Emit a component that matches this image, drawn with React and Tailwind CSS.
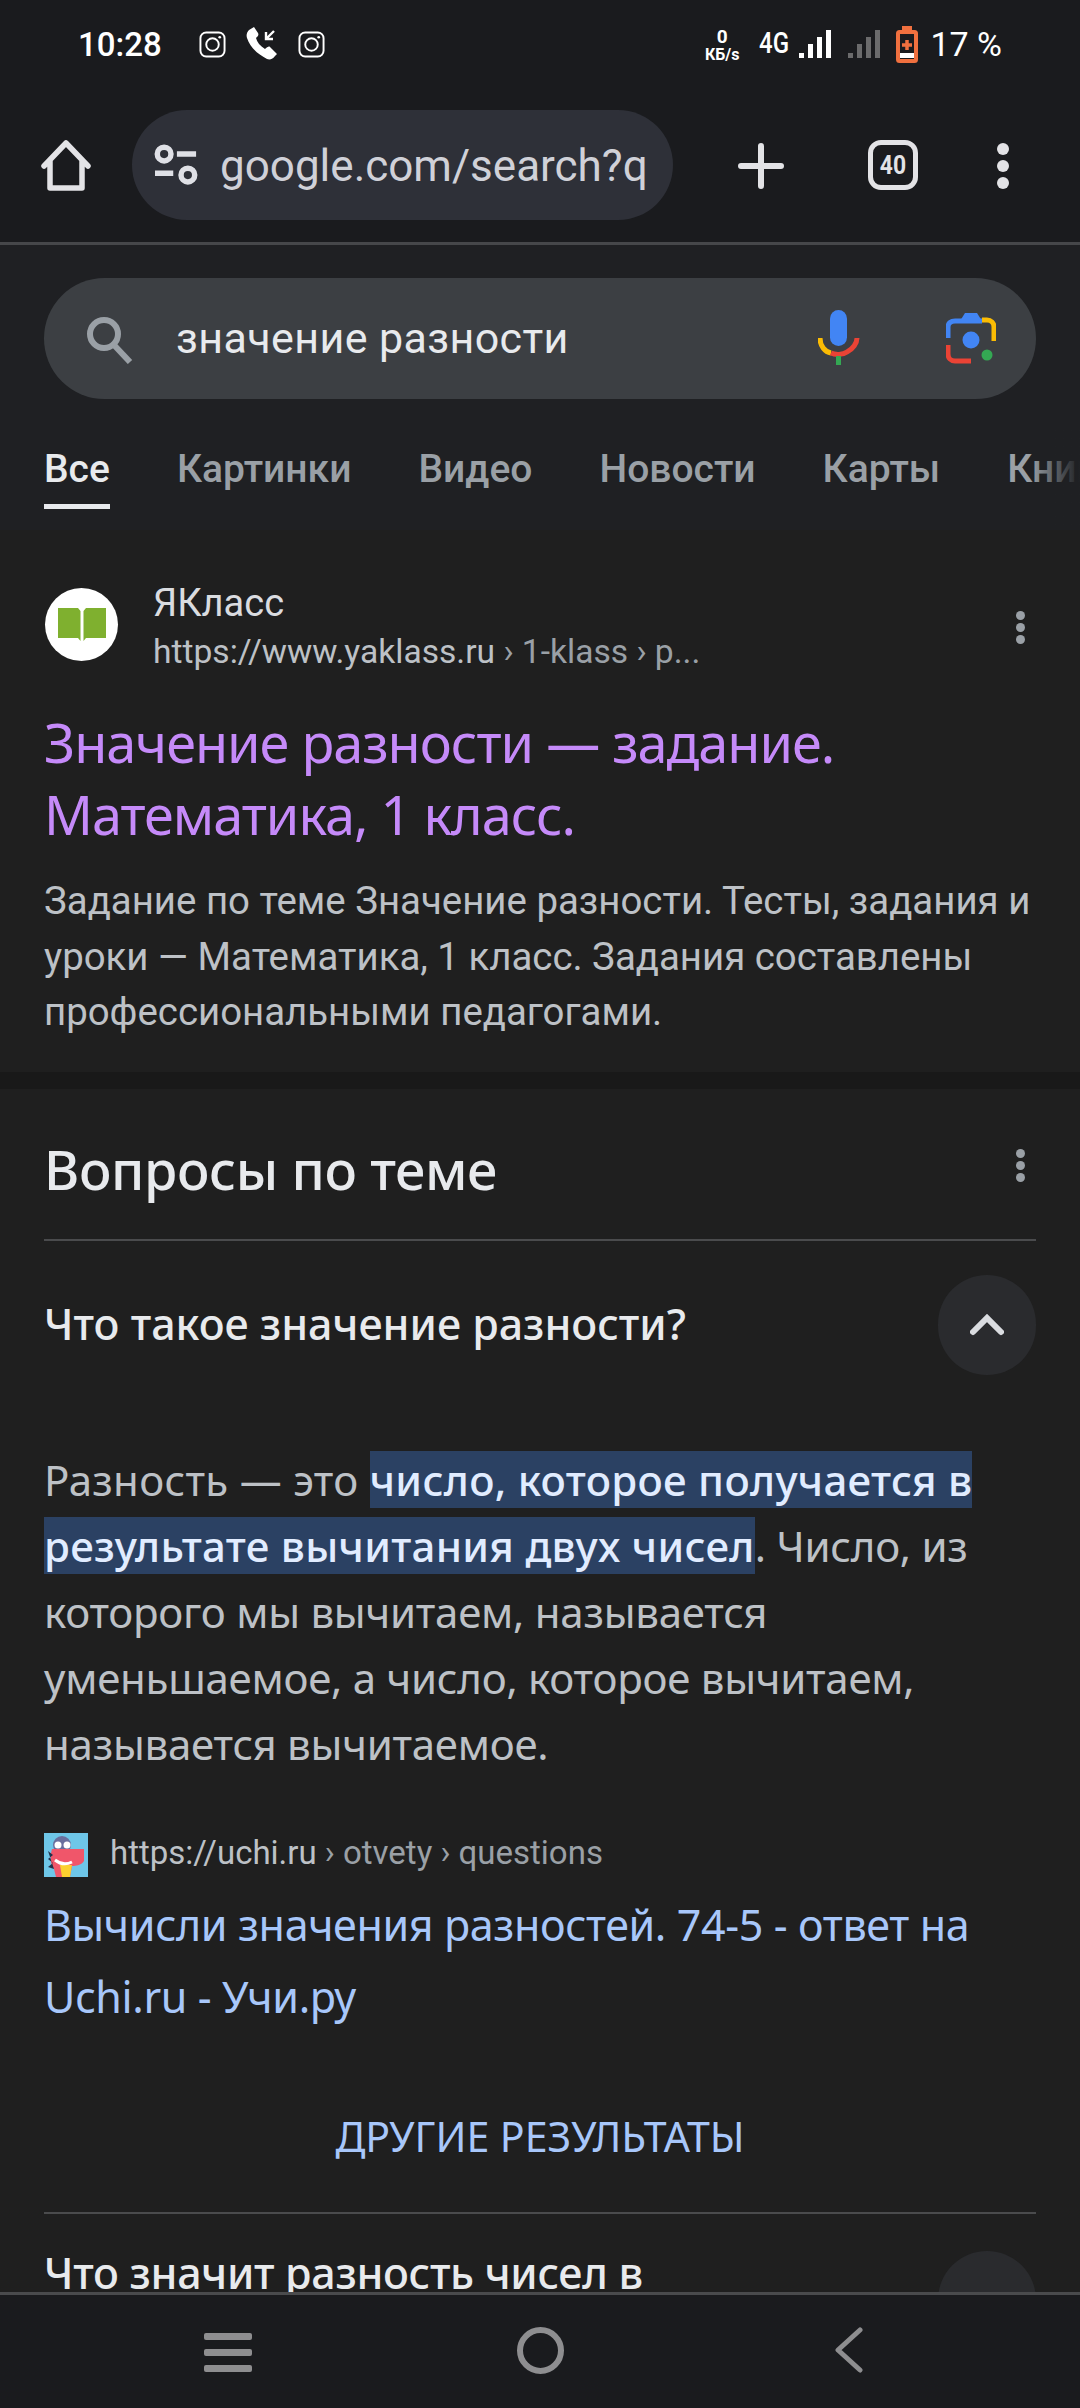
const F = { fontFamily: 'Roboto, "Noto Sans", sans-serif' };
const G = { fontFamily: '"Noto Sans", Roboto, sans-serif' };

function Insta() {
  return (
    <svg width="27" height="27" viewBox="0 0 28 28" fill="none" stroke="#fff">
      <rect x="1.5" y="1.5" width="25" height="25" rx="6" strokeWidth="2" />
      <circle cx="14" cy="14" r="6.5" strokeWidth="2" />
      <circle cx="21.5" cy="6.5" r="1.4" fill="#fff" stroke="none" />
    </svg>
  );
}

function Bars({ color, cls }) {
  return (
    <svg width="32" height="30" viewBox="0 0 32 30" className={cls} fill={color}>
      <rect x="0" y="24" width="5" height="5" /><rect x="9" y="15" width="5" height="14" /><rect x="18" y="8" width="5" height="21" /><rect x="27" y="1" width="5" height="28" />
    </svg>
  );
}

function Dots() {
  return (
    <>
      <div className="w-[9px] h-[9px] rounded-full bg-[#9aa0a6]" />
      <div className="w-[9px] h-[9px] rounded-full bg-[#9aa0a6]" />
      <div className="w-[9px] h-[9px] rounded-full bg-[#9aa0a6]" />
    </>
  );
}

function StatusBar() {
  return (
    <div className="h-[88px] flex items-center pl-[78px] pr-[78px] text-white" style={F}>
      <span className="text-[33px] font-medium leading-none">10:28</span>
      <div className="flex items-center ml-[37px] gap-[19px]">
        <Insta />
        <svg width="34" height="34" viewBox="0 0 34 34" fill="#fff">
          <path d="M4 3 C2 5 1 8 2 11 C5 20 12 27 22 32 C25 33 28 32 30 29 L32 27 L25 20 C24 19 22 20 20 22 C15 19 12 15 11 11 C13 9 14 8 13 6 L9 0 Z" />
          <path d="M29 4 L22 11 M21 5 L21 12 L28 12" stroke="#fff" strokeWidth="2.4" fill="none" />
        </svg>
        <Insta />
      </div>
      <div className="ml-auto flex items-center">
        <div className="flex flex-col items-center text-[16px] font-bold leading-[15px] mr-[20px] mt-[1px]">
          <span className="text-[19px] leading-[20px]">0</span>
          <span>КБ/s</span>
        </div>
        <span className="text-[30px] font-medium leading-none mr-[11px] mt-[-2px] scale-x-[0.8] origin-left w-[29px]">4G</span>
        <Bars color="#fff" cls="mr-[17px]" />
        <Bars color="#6b6b6c" cls="mr-[16px]" />
        <svg width="22" height="37" viewBox="0 0 22 37" className="mr-[12px]">
          <rect x="6" y="0" width="10" height="5" fill="#f0703f" />
          <rect x="2" y="6" width="18" height="29" rx="1.5" fill="#1a1b1e" stroke="#f0703f" strokeWidth="4" />
          <rect x="4" y="27" width="14" height="5" fill="#fff" />
          <path d="M11 14 V24 M6 19 H16" stroke="#f0703f" strokeWidth="3.5" />
        </svg>
        <span className="text-[34px] leading-none whitespace-nowrap">17 %</span>
      </div>
    </div>
  );
}

function Toolbar() {
  return (
    <div className="h-[157px] flex items-start relative border-b-[3px] border-[#46474a]" style={F}>
      <svg width="50" height="52" viewBox="0 0 50 52" className="absolute left-[41px] top-[52px]" fill="none" stroke="#e3e3e6" strokeWidth="5.5" strokeLinejoin="round" strokeLinecap="round">
        <path d="M3 26 L25 3 L47 26 M9 21 V48 H41 V21" />
      </svg>
      <div className="absolute left-[132px] top-[22px] w-[541px] h-[110px] rounded-full bg-[#2e3038] flex items-center overflow-hidden">
        <svg width="50" height="42" viewBox="0 0 50 46" className="ml-[19px] shrink-0" fill="none" stroke="#dfe0e6" strokeWidth="6">
          <circle cx="12" cy="11" r="7.5" />
          <path d="M26 11 H47 M2 32 H22" />
          <circle cx="38" cy="34" r="7.5" />
        </svg>
        <span className="ml-[19px] text-[44px] text-[#d0d1d8] whitespace-nowrap leading-none mt-[1px]">google.com/search?q</span>
      </div>
      <svg width="46" height="46" viewBox="0 0 46 46" className="absolute left-[738px] top-[55px]" stroke="#e3e3e6" strokeWidth="6" strokeLinecap="round">
        <path d="M23 3 V43 M3 23 H43" />
      </svg>
      <div className="absolute left-[868px] top-[52px] w-[50px] h-[50px] border-[5px] border-[#e3e3e6] rounded-[13px] flex items-center justify-center text-[#e3e3e6] text-[26px] font-bold">
        <span className="scale-x-[0.88]">40</span>
      </div>
      <div className="absolute left-[997px] top-[55px] flex flex-col gap-[5px]">
        <div className="w-[12px] h-[12px] rounded-full bg-[#e3e3e6]" />
        <div className="w-[12px] h-[12px] rounded-full bg-[#e3e3e6]" />
        <div className="w-[12px] h-[12px] rounded-full bg-[#e3e3e6]" />
      </div>
    </div>
  );
}

function SearchHeader() {
  return (
    <div className="h-[285px] bg-[#1f2023] relative overflow-hidden" style={F}>
      <div className="absolute left-[44px] top-[33px] w-[992px] h-[121px] rounded-full bg-[#3c3f43] flex items-center">
        <svg width="50" height="50" viewBox="0 0 50 50" className="ml-[40px]" fill="none" stroke="#9aa0a6" strokeWidth="6">
          <circle cx="20" cy="20" r="14" />
          <path d="M30 31 L46 48" />
        </svg>
        <span className="ml-[42px] text-[43px] text-[#e8eaed] leading-none tracking-[0.4px]">значение разности</span>
        <svg width="42" height="56" viewBox="0 0 42 56" className="absolute left-[774px] top-[32px]">
          <rect x="12" y="0" width="17" height="36" rx="8.5" fill="#4285f4" />
          <path d="M2 28 C2 36 7 42 13 43" stroke="#fbbc04" strokeWidth="5" fill="none" />
          <path d="M13 43 C17 45 25 45 29 42 C35 39 39 33 39 28" stroke="#ea4335" strokeWidth="5" fill="none" />
          <rect x="18" y="46" width="5" height="9" fill="#34a853" />
        </svg>
        <svg width="50" height="52" viewBox="0 0 50 52" className="absolute left-[902px] top-[34px]" fill="none">
          <path d="M2 26 V15 C2 11 5 9 9 9 H36" stroke="#4285f4" strokeWidth="5" />
          <path d="M14 9 L19 1 H31 L36 9 Z" fill="#4285f4" />
          <path d="M36 8 H41 C45 8 48 11 48 15 V29" stroke="#fbbc04" strokeWidth="5" />
          <path d="M2 33 V42 C2 46 5 49 9 49 H25" stroke="#ea4335" strokeWidth="5" />
          <circle cx="25" cy="28" r="8.5" fill="#4285f4" />
          <circle cx="41" cy="43" r="5.5" fill="#34a853" />
        </svg>
      </div>
      <div className="absolute left-[44px] top-[200px] flex gap-[67px] text-[39px] leading-[48px] text-[#9aa0a6] font-medium whitespace-nowrap">
        <div className="relative text-[#e8eaed]">Все<div className="absolute left-0 right-0 top-[59px] h-[5px] bg-[#e8eaed]" /></div>
        <span>Картинки</span>
        <span>Видео</span>
        <span>Новости</span>
        <span>Карты</span>
        <span>Книги</span>
      </div>
      <div className="absolute right-0 top-[180px] bottom-0 w-[50px] bg-gradient-to-r from-transparent to-[#1f2023]" />
    </div>
  );
}

function ResultCard() {
  return (
    <div className="h-[559px] relative border-b-[17px] border-[#191919]" style={F}>
      <div className="absolute left-[45px] top-[58px] w-[73px] h-[73px] rounded-full bg-white flex items-center justify-center">
        <svg width="48" height="34" viewBox="0 0 48 34" fill="#7fb02f">
          <path d="M0 0 H20 L22.5 3 V33 L20 30 H0 Z" />
          <path d="M48 0 H28 L25.5 3 V33 L28 30 H48 Z" />
        </svg>
      </div>
      <div className="absolute left-[153px] top-[49px] text-[38px] leading-[48px] text-[#dadce0]">ЯКласс</div>
      <div className="absolute left-[153px] top-[100px] text-[33.6px] leading-[44px] text-[#bdc1c6] whitespace-nowrap">https://www.yaklass.ru<span className="text-[#9aa0a6]"> › 1-klass › p...</span></div>
      <div className="absolute left-[1016px] top-[81px] flex flex-col gap-[3px]"><Dots /></div>
      <div className="absolute left-[44px] top-[176px] w-[990px] text-[54px] leading-[72px] tracking-[-1px] text-[#c58af9]" style={G}>Значение разности — задание.<br />Математика, 1 класс.</div>
      <div className="absolute left-[44px] top-[343px] w-[1010px] text-[38.4px] leading-[55.5px] text-[#bdc1c6] whitespace-nowrap">Задание по теме Значение разности. Тесты, задания и<br />уроки — Математика, 1 класс. Задания составлены<br />профессиональными педагогами.</div>
    </div>
  );
}

function QA() {
  return (
    <div className="relative flex-1 overflow-hidden">
      <div className="absolute left-[44px] top-[47px] text-[54px] leading-[66px] tracking-[-0.4px] text-[#e8eaed] font-medium" style={G}>Вопросы по теме</div>
      <div className="absolute left-[1016px] top-[60px] flex flex-col gap-[3px]"><Dots /></div>
      <div className="absolute left-[44px] top-[150px] w-[992px] h-[2px] bg-[#4a4b4d]" />
      <div className="absolute left-[44px] top-[209px] text-[43px] leading-[52px] text-[#e8eaed] font-medium" style={G}>Что такое значение разности?</div>
      <div className="absolute left-[938px] top-[186px] w-[98px] h-[100px] rounded-full bg-[#2a2b2e] flex items-center justify-center">
        <svg width="34" height="22" viewBox="0 0 34 22" fill="none" stroke="#dadce0" strokeWidth="6" strokeLinecap="round"><path d="M3 18 L17 4 L31 18" /></svg>
      </div>
      <div className="absolute left-[44px] top-[358px] w-[1020px] text-[42px] leading-[66px] tracking-[-0.25px] text-[#bdc1c6] whitespace-nowrap" style={G}>
        <span className="tracking-[0.3px]">Разность — это </span><span className="bg-[#2b4163] text-[#e1ecff] font-medium tracking-[0.3px]">число, которое получается в</span><br />
        <span className="bg-[#2b4163] text-[#e1ecff] font-medium tracking-[0.3px]">результате вычитания двух чисел</span>. Число, из<br />
        которого мы вычитаем, называется<br />
        уменьшаемое, а число, которое вычитаем,<br />
        называется вычитаемое.
      </div>
      <svg width="44" height="44" viewBox="0 0 44 44" className="absolute left-[44px] top-[744px]">
        <rect width="44" height="44" fill="#6ec6e8" />
        <circle cx="18" cy="12" r="9" fill="#6a6f9e" />
        <circle cx="14" cy="12" r="3.5" fill="#fff" /><circle cx="23" cy="12" r="3.5" fill="#fff" />
        <path d="M8 16 H40 V28 C38 32 32 33 28 33 L26 44 H12 L10 36 C6 32 6 22 8 16 Z" fill="#f0566a" />
        <path d="M16 32 H28 L26 44 H18 Z" fill="#fbd02f" />
        <path d="M11 27 C16 31 22 32 28 29" stroke="#fff" strokeWidth="3" fill="none" />
        <path d="M4 18 L9 22 L4 26 L9 30 L4 34 L10 36 Z" fill="#22304a" />
      </svg>
      <div className="absolute left-[110px] top-[742px] text-[33px] leading-[44px] text-[#bdc1c6] whitespace-nowrap" style={F}>https://uchi.ru<span className="text-[#9aa0a6]"> › otvety › questions</span></div>
      <div className="absolute left-[44px] top-[800px] text-[43px] leading-[72px] tracking-[-0.37px] text-[#a8c7fa] whitespace-nowrap" style={G}>Вычисли значения разностей. 74-5 - ответ на<br />Uchi.ru - Учи.ру</div>
      <div className="absolute left-0 right-0 top-[1022px] text-center text-[41px] leading-[50px] text-[#a8c7fa]" style={G}>ДРУГИЕ РЕЗУЛЬТАТЫ</div>
      <div className="absolute left-[44px] top-[1123px] w-[992px] h-[2px] bg-[#4a4b4d]" />
      <div className="absolute left-[44px] top-[1158px] text-[43px] leading-[52px] tracking-[-0.3px] text-[#e8eaed] font-medium" style={G}>Что значит разность чисел в</div>
      <div className="absolute left-[938px] top-[1162px] w-[98px] h-[100px] rounded-full bg-[#2a2b2e]" />
    </div>
  );
}

function NavBar() {
  return (
    <div className="h-[116px] bg-[#1a1b1e] border-t-[3px] border-[#4a4b4d] relative">
      <div className="absolute left-[204px] top-[38px] flex flex-col gap-[9px]">
        <div className="w-[48px] h-[7px] rounded-[2px] bg-[#8e8e90]" />
        <div className="w-[48px] h-[7px] rounded-[2px] bg-[#8e8e90]" />
        <div className="w-[48px] h-[7px] rounded-[2px] bg-[#8e8e90]" />
      </div>
      <div className="absolute left-[517px] top-[32px] w-[47px] h-[47px] rounded-full border-[6px] border-[#8e8e90]" />
      <svg width="32" height="46" viewBox="0 0 32 46" className="absolute left-[833px] top-[32px]" fill="none" stroke="#8e8e90" strokeWidth="5" strokeLinecap="round" strokeLinejoin="round"><path d="M27 3 L5 23 L27 43" /></svg>
    </div>
  );
}

export default function App() {
  return (
    <div className="w-[1080px] h-[2408px] overflow-hidden flex flex-col bg-[#1f1f1f]">
      <div className="bg-[#1a1b1e]">
        <StatusBar />
        <Toolbar />
      </div>
      <SearchHeader />
      <ResultCard />
      <QA />
      <NavBar />
    </div>
  );
}
